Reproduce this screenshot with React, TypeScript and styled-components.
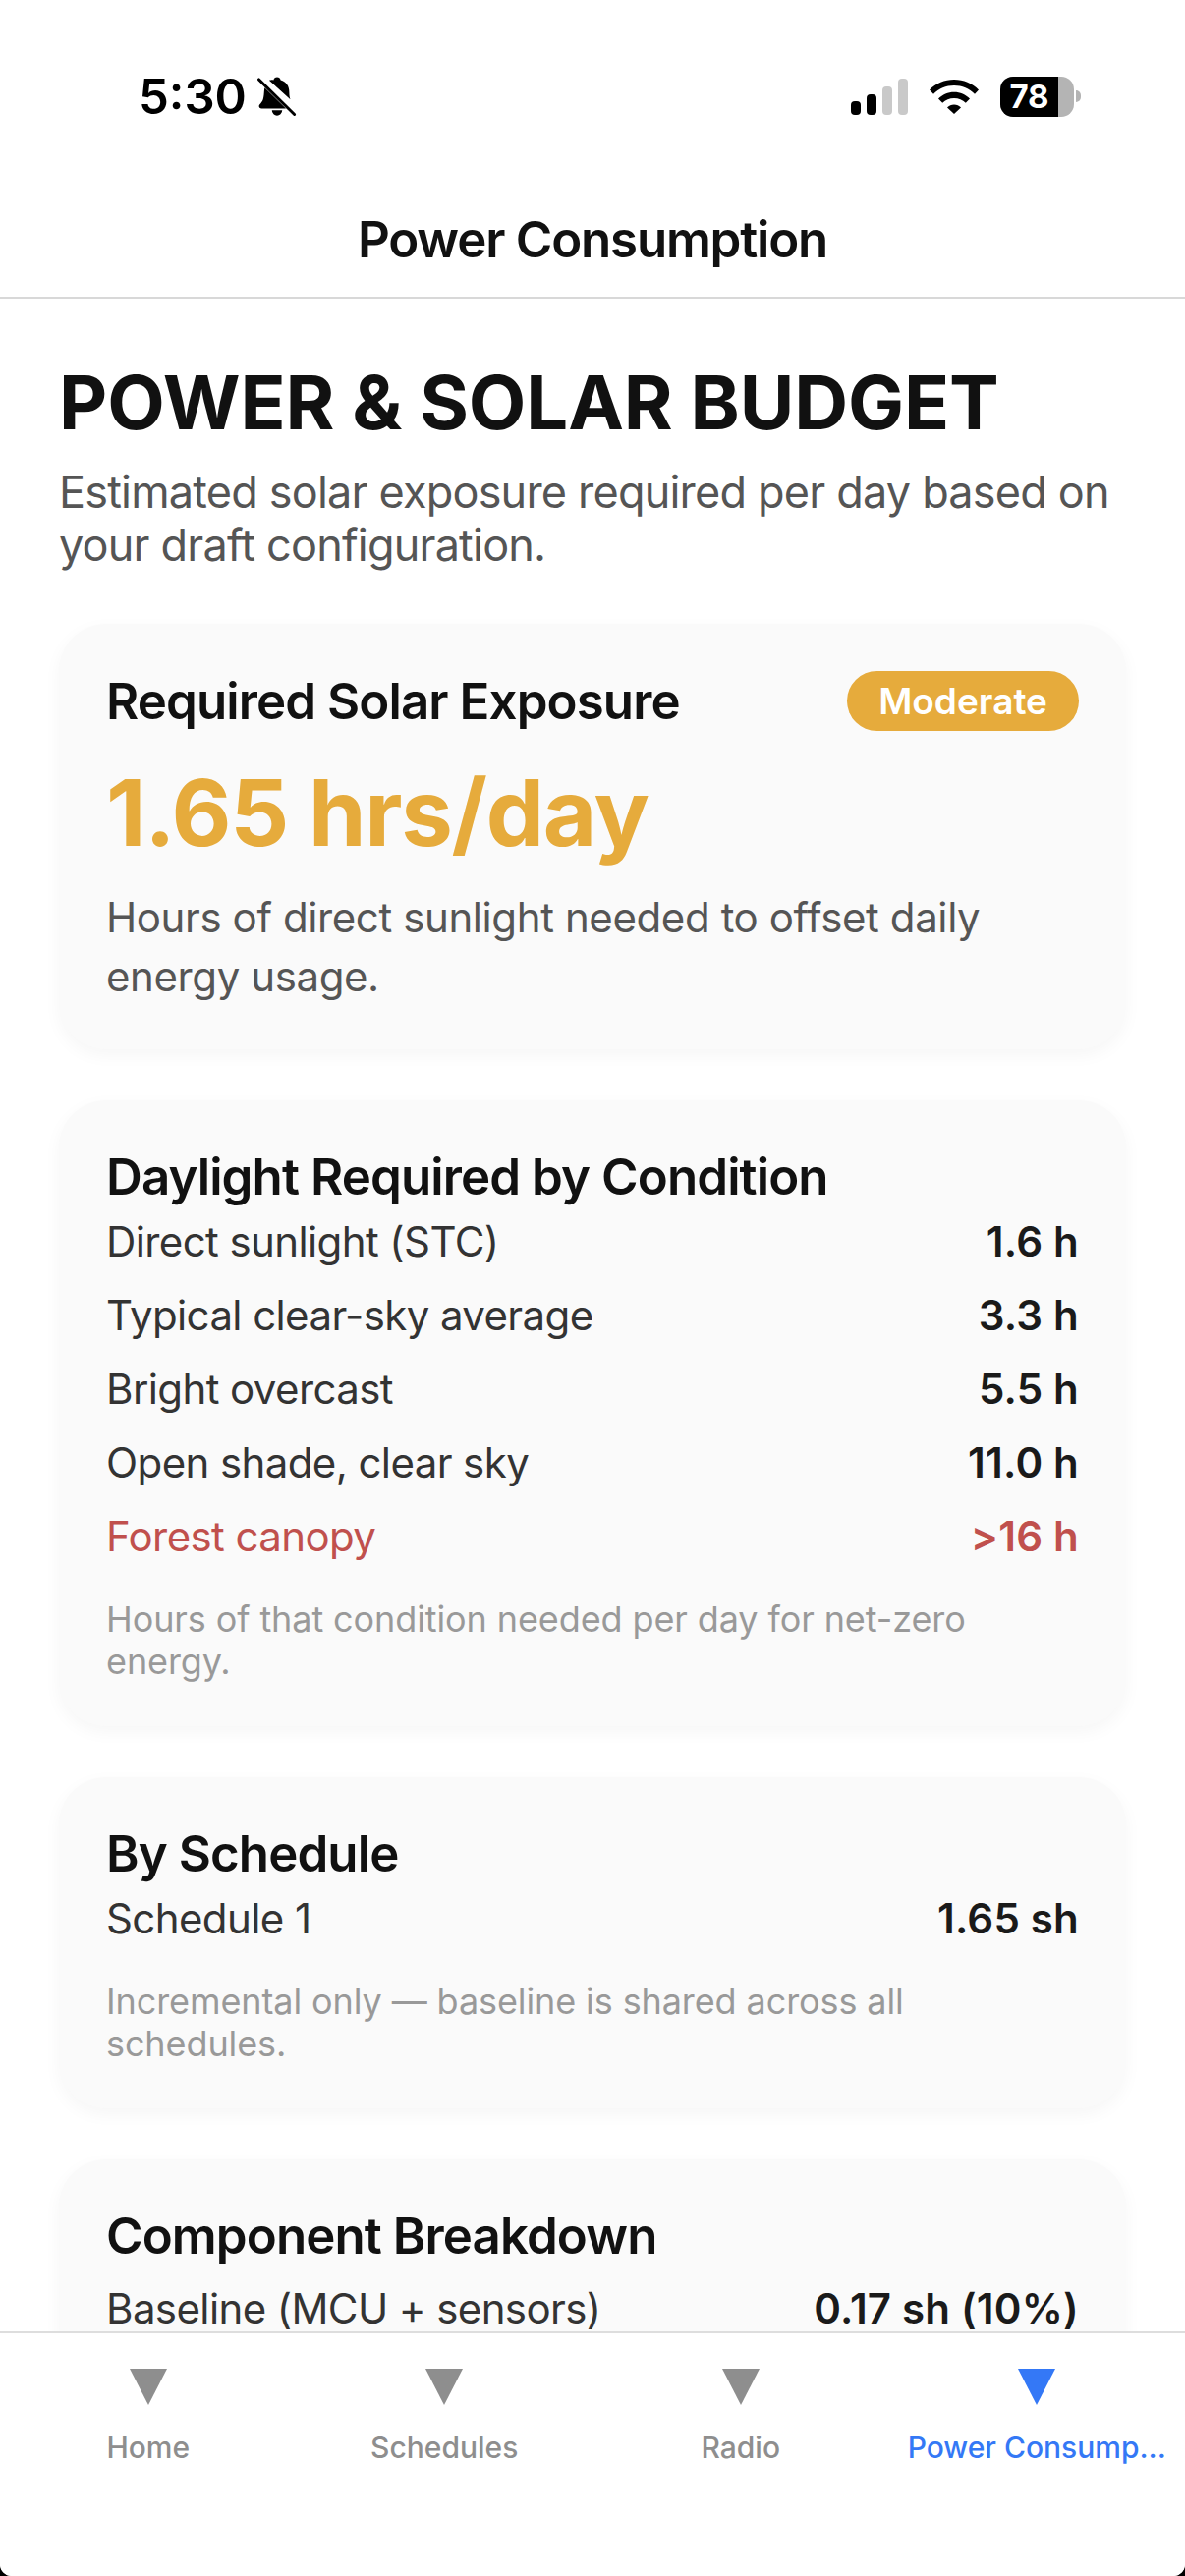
import React from 'react';
import styled, { createGlobalStyle } from 'styled-components';

const rows = [
      { label: 'Direct sunlight (STC)', value: '1.6 h' },
      { label: 'Typical clear-sky average', value: '3.3 h' },
      { label: 'Bright overcast', value: '5.5 h' },
      { label: 'Open shade, clear sky', value: '11.0 h' },
      { label: 'Forest canopy', value: '>16 h', danger: true },
];

const tabs = [
      { label: 'Home' },
      { label: 'Schedules' },
      { label: 'Radio' },
      { label: 'Power Consump...', active: true },
];

const BellOff = () => (
      <svg width='40' height='43' viewBox='0 0 42 44'>
            <path
                  d='M21 1c2 0 3.400 1.300 3.800 3.200 6 1.600 9.200 6.400 9.200 13 0 3 .4 5.600 1.200 7.600L12.500 4.500C13.700 4 15 3.700 17.200 4.200 17.600 2.300 19 1 21 1ZM7.700 12.400 30.500 34.500H4.500C2.800 34.500 1.700 33.400 1.700 32c0-1.300 1-2.200 2-3.300 1.500-1.700 3-3.700 3.400-11.500.1-1.700.3-3.300.6-4.800ZM15.500 36.500h11c-.4 3.300-2.600 5.700-5.500 5.700s-5.100-2.400-5.500-5.700Z'
                  fill='#000'
            />
            <path d='M1.500 3.500 39.500 41' stroke='#000' strokeWidth='3' strokeLinecap='round' />
      </svg>
);

const Wifi = () => (
      <svg width='50' height='36' viewBox='0 0 50 36'>
            <path d='M0 11.500C6.500 4.800 15.300 1 25 1s18.500 3.800 25 10.500l-4 4.200C40.500 10.300 33.200 7 25 7S9.500 10.300 4 15.700Z' fill='#000' />
            <path d='M9 20.500C13.200 16.300 18.800 13.700 25 13.700s11.800 2.600 16 6.800l-4.200 4.300C33.700 21.800 29.600 20 25 20s-8.700 1.800-11.800 4.800Z' fill='#000' />
            <path d='M18 29.500c1.800-1.800 4.300-2.900 7-2.900s5.200 1.100 7 2.900L25 36Z' fill='#000' />
      </svg>
);

const TabMarker = ({ active }: { active?: boolean }) => (
      <svg width='38' height='37' viewBox='0 0 38 37'>
            <path d='M0 0H38L19 37Z' fill={active ? '#3478f6' : '#8e8e8e'} />
      </svg>
);

const App: React.FC = () => {
      return (
            <>
                  <GlobalStyle />
                  <Screen>
                        <StatusBar>
                              <TimeGroup>
                                    <Time>5:30</Time>
                                    <BellOff />
                              </TimeGroup>
                              <StatusIcons>
                                    <Signal>
                                          <SignalBar $h={14} $on />
                                          <SignalBar $h={21} $on />
                                          <SignalBar $h={29} />
                                          <SignalBar $h={37} />
                                    </Signal>
                                    <Wifi />
                                    <Battery>
                                          <BatteryBody>
                                                <BatteryFill>78</BatteryFill>
                                          </BatteryBody>
                                          <BatteryCap />
                                    </Battery>
                              </StatusIcons>
                        </StatusBar>
                        <NavBar>Power Consumption</NavBar>
                        <Content>
                              <PageTitle>POWER &amp; SOLAR BUDGET</PageTitle>
                              <PageIntro>
                                    Estimated solar exposure required per day based on your draft configuration.
                              </PageIntro>

                              <Card>
                                    <CardHead>
                                          <CardTitle>Required Solar Exposure</CardTitle>
                                          <Badge>Moderate</Badge>
                                    </CardHead>
                                    <BigValue>1.65 hrs/day</BigValue>
                                    <CardText>Hours of direct sunlight needed to offset daily energy usage.</CardText>
                              </Card>

                              <Card>
                                    <CardTitle>Daylight Required by Condition</CardTitle>
                                    <RowList>
                                          {rows.map((row) => (
                                                <Row key={row.label} $danger={row.danger}>
                                                      <span>{row.label}</span>
                                                      <RowValue $danger={row.danger}>{row.value}</RowValue>
                                                </Row>
                                          ))}
                                    </RowList>
                                    <Note>Hours of that condition needed per day for net-zero energy.</Note>
                              </Card>

                              <Card>
                                    <CardTitle>By Schedule</CardTitle>
                                    <RowList>
                                          <Row>
                                                <span>Schedule 1</span>
                                                <RowValue>1.65 sh</RowValue>
                                          </Row>
                                    </RowList>
                                    <Note>Incremental only — baseline is shared across all schedules.</Note>
                              </Card>

                              <Card>
                                    <CardTitle>Component Breakdown</CardTitle>
                                    <RowList $top={6}>
                                          <Row>
                                                <span>Baseline (MCU + sensors)</span>
                                                <RowValue>0.17 sh (10%)</RowValue>
                                          </Row>
                                    </RowList>
                              </Card>
                        </Content>
                        <TabBar>
                              {tabs.map((tab) => (
                                    <Tab key={tab.label}>
                                          <TabMarker active={tab.active} />
                                          <TabLabel $active={tab.active}>{tab.label}</TabLabel>
                                    </Tab>
                              ))}
                        </TabBar>
                  </Screen>
            </>
      );
};

export default App;

const GlobalStyle = createGlobalStyle`
      html, body {
            margin: 0;
            padding: 0;
            background: #000;
      }
      * {
            box-sizing: border-box;
      }
`;

const Screen = styled.div`
      display: flex;
      flex-direction: column;
      width: 1206px;
      height: 2622px;
      overflow: hidden;
      background: #fff;
      border-radius: 0 0 12px 12px;
      font-family: Inter, 'Liberation Sans', sans-serif;
`;

const StatusBar = styled.div`
      display: flex;
      flex: none;
      justify-content: space-between;
      align-items: center;
      height: 196px;
      padding: 0 106px 0 141px;
`;

const TimeGroup = styled.div`
      display: flex;
      align-items: center;
      gap: 11px;
`;

const Time = styled.span`
      font-size: 49px;
      font-weight: 600;
      color: #000;
`;

const StatusIcons = styled.div`
      display: flex;
      align-items: center;
      gap: 22px;
`;

const Signal = styled.div`
      display: flex;
      align-items: flex-end;
      gap: 6px;
`;

const SignalBar = styled.div<{ $h: number; $on?: boolean }>`
      width: 10px;
      height: ${(p) => p.$h}px;
      border-radius: 4px;
      background: ${(p) => (p.$on ? '#000' : '#c9c9c9')};
`;

const Battery = styled.div`
      display: flex;
      align-items: center;
      gap: 2px;
`;

const BatteryBody = styled.div`
      width: 75px;
      height: 41px;
      border-radius: 13px;
      overflow: hidden;
      background: #b4b4b4;
`;

const BatteryFill = styled.div`
      width: 59px;
      height: 100%;
      background: #000;
      color: #fff;
      font-size: 33px;
      font-weight: 700;
      line-height: 41px;
      text-align: center;
`;

const BatteryCap = styled.div`
      width: 5px;
      height: 12px;
      border-radius: 0 6px 6px 0;
      background: #b4b4b4;
`;

const NavBar = styled.div`
      display: flex;
      flex: none;
      justify-content: center;
      align-items: center;
      height: 108px;
      padding-bottom: 12px;
      border-bottom: 2px solid #d8d8d8;
      font-size: 51px;
      font-weight: 600;
      letter-spacing: -1.2px;
      color: #111;
`;

const Content = styled.div`
      flex: 1;
      min-height: 0;
      overflow: hidden;
      padding: 63px 60px 0;
`;

const PageTitle = styled.h1`
      margin: 0;
      font-size: 76px;
      font-weight: 700;
      line-height: 84px;
      letter-spacing: -0.1px;
      color: #111;
`;

const PageIntro = styled.p`
      margin: 23px 0 53px;
      font-size: 45px;
      line-height: 54px;
      letter-spacing: -0.8px;
      color: #555;
`;

const Card = styled.section`
      margin-bottom: 52px;
      padding: 48px 48px 44px;
      border-radius: 48px;
      background: #fafafa;
      box-shadow: 0 6px 18px rgba(0, 0, 0, 0.04);
`;

const CardHead = styled.div`
      display: flex;
      justify-content: space-between;
      align-items: center;
`;

const CardTitle = styled.h2`
      margin: 0;
      font-size: 51px;
      font-weight: 600;
      line-height: 60px;
      letter-spacing: -0.9px;
      color: #111;
`;

const Badge = styled.span`
      padding: 0 32px;
      border-radius: 31px;
      background: #e6ab3c;
      color: #fff;
      font-size: 37px;
      font-weight: 600;
      line-height: 61px;
`;

const BigValue = styled.div`
      margin-top: 25px;
      font-size: 94px;
      font-weight: 700;
      line-height: 116px;
      letter-spacing: -1.3px;
      color: #e6ab3c;
`;

const CardText = styled.p`
      margin: 19px 0 0;
      font-size: 42px;
      line-height: 60px;
      letter-spacing: -0.4px;
      color: #555;
`;

const RowList = styled.div<{ $top?: number }>`
      display: flex;
      flex-direction: column;
      margin-top: ${(p) => p.$top ?? -2}px;
`;

const Row = styled.div<{ $danger?: boolean }>`
      display: flex;
      justify-content: space-between;
      align-items: center;
      height: 75px;
      font-size: 42px;
      letter-spacing: -0.6px;
      color: ${(p) => (p.$danger ? '#c0504d' : '#333')};
`;

const RowValue = styled.span<{ $danger?: boolean }>`
      font-weight: 600;
      letter-spacing: 0.2px;
      color: ${(p) => (p.$danger ? '#c0504d' : '#1a1a1a')};
`;

const Note = styled.p`
      margin: 26px 0 0;
      font-size: 36px;
      line-height: 43px;
      letter-spacing: -0.1px;
      color: #999;
`;

const TabBar = styled.nav`
      display: grid;
      flex: none;
      grid-template-columns: repeat(4, 1fr);
      height: 249px;
      padding-top: 36px;
      border-top: 2px solid #ddd;
      background: #fff;
`;

const Tab = styled.div`
      display: flex;
      flex-direction: column;
      align-items: center;
      gap: 25px;
`;

const TabLabel = styled.span<{ $active?: boolean }>`
      font-size: 30px;
      font-weight: 500;
      white-space: nowrap;
      color: ${(p) => (p.$active ? '#3478f6' : '#8e8e8e')};
`;
